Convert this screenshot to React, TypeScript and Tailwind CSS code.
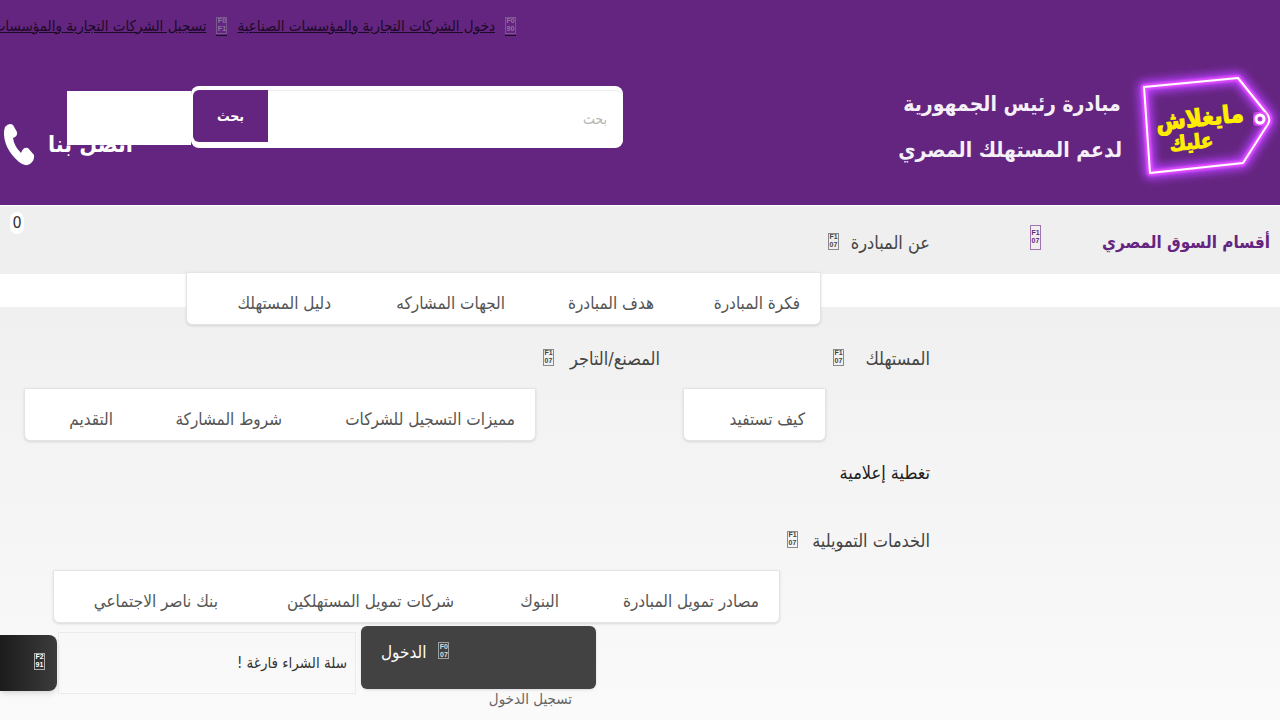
import { clsx } from 'clsx';

type SubLink = { text: string; width: string };

type MenuItem = {
  text: string;
  width: string;
  panel: string;
  links: SubLink[];
};

const about: MenuItem = {
  text: 'عن المبادرة',
  width: 'w-[109px]',
  panel: 'w-[635px]',
  links: [
    { text: 'فكرة المبادرة', width: 'w-[146px]' },
    { text: 'هدف المبادرة', width: 'w-[149px]' },
    { text: 'الجهات المشاركه', width: 'w-[174px]' },
    { text: 'دليل المستهلك', width: 'w-[120px]' },
  ],
};

const consumer: MenuItem = {
  text: 'المستهلك',
  width: 'w-[104px]',
  panel: 'w-[143px]',
  links: [{ text: 'كيف تستفيد', width: 'w-[100px]' }],
};

const merchant: MenuItem = {
  text: 'المصنع/التاجر',
  width: 'w-[124px]',
  panel: 'w-[512px]',
  links: [
    { text: 'مميزات التسجيل للشركات', width: 'w-[233px]' },
    { text: 'شروط المشاركة', width: 'w-[169px]' },
    { text: 'التقديم', width: 'w-[60px]' },
  ],
};

const finance: MenuItem = {
  text: 'الخدمات التمويلية',
  width: 'w-[150px]',
  panel: 'w-[727px]',
  links: [
    { text: 'مصادر تمويل المبادرة', width: 'w-[200px]' },
    { text: 'البنوك', width: 'w-[105px]' },
    { text: 'شركات تمويل المستهلكين', width: 'w-[236px]' },
    { text: 'بنك ناصر الاجتماعي', width: 'w-[130px]' },
  ],
};

// boxed code point, two hex digits per line
function Glyph({ code, className }: { code: string; className?: string }) {
  return (
    <span
      aria-hidden="true"
      dir="ltr"
      className={clsx(
        "flex w-[11px] shrink-0 flex-col items-center justify-center border border-current/60 font-['Liberation_Sans',sans-serif] text-[7px] leading-[8px] font-bold",
        className
      )}
    >
      <span>{code.slice(0, 2)}</span>
      <span>{code.slice(2)}</span>
    </span>
  );
}

function MenuEntry({ item }: { item: MenuItem }) {
  return (
    <li className="flex shrink-0 items-start">
      <a href="#" className={clsx('flex h-14 shrink-0 items-center justify-between pl-[7px] text-lg text-[#444]', item.width)}>
        <span>{item.text}</span>
        <Glyph code="F107" className="mb-1 h-[17px]" />
      </a>
      <ul
        className={clsx(
          'mt-[57px] flex h-[53px] shrink-0 items-center rounded-b-md border border-[#e4e4e4] bg-white pt-2.5 pr-5 text-[17px] text-[#555] shadow-sm',
          item.panel
        )}
      >
        {item.links.map(link => (
          <li key={link.text} className={clsx('shrink-0', link.width)}>
            <a href="#">{link.text}</a>
          </li>
        ))}
      </ul>
    </li>
  );
}

function Logo() {
  const tag = 'M14 27 L108 18 L137 54 Q141 59 138 64 L113 103 L20 113 Z';

  return (
    <svg viewBox="0 0 150 130" className="h-[130px] w-[150px] shrink-0" role="img" aria-label="مايغلاش عليك">
      <defs>
        <filter id="glow" x="-20%" y="-20%" width="140%" height="140%">
          <feGaussianBlur stdDeviation="4" />
        </filter>
        <filter id="soft" x="-20%" y="-20%" width="140%" height="140%">
          <feGaussianBlur stdDeviation="1" />
        </filter>
      </defs>
      <g fill="none" strokeLinejoin="round">
        <path d={tag} stroke="#b93cff" strokeWidth="12" filter="url(#glow)" />
        <path d={tag} stroke="#e650ff" strokeWidth="6" filter="url(#soft)" />
        <path d={tag} stroke="#fff" strokeWidth="2" />
        <circle cx="130" cy="59" r="5" stroke="#e650ff" strokeWidth="6" filter="url(#soft)" />
        <circle cx="130" cy="59" r="4" stroke="#fff" strokeWidth="3" />
      </g>
      <g fill="#ffee00" stroke="#ffee00" strokeWidth="1" fontWeight="700" textAnchor="middle" transform="rotate(-6 70 60)">
        <text x="70" y="66" fontSize="24">مايغلاش</text>
        <text x="59" y="88" fontSize="20">عليك</text>
      </g>
    </svg>
  );
}

function Header() {
  return (
    <header className="relative h-[205px] overflow-hidden bg-[#642580]">
      <div className="flex h-[52px] items-center pr-[764px] text-[15px] whitespace-nowrap text-[#1c0a26]">
        <a href="#" className="flex shrink-0 items-center gap-2.5">
          <span className="border-b border-[#1c0a26] pb-px">
            <Glyph code="F090" className="h-[17px] text-[#8d7799]" />
          </span>
          <span className="underline">دخول الشركات التجارية والمؤسسات الصناعية</span>
        </a>
        <a href="#" className="mr-2.5 flex shrink-0 items-center gap-2.5">
          <span className="border-b border-[#1c0a26] pb-px">
            <Glyph code="F0F1" className="h-[17px] text-[#8d7799]" />
          </span>
          <span className="underline">تسجيل الشركات التجارية والمؤسسات الصناعية</span>
        </a>
      </div>

      <div className="flex items-start justify-between pl-[67px]">
        <div className="flex items-center gap-2 pt-2">
          <Logo />
          <h1 className="w-[220px] pt-1 text-center text-[21px] leading-[46px] font-bold whitespace-nowrap text-[#f5f0f7]">
            مبادرة رئيس الجمهورية
            <br />
            لدعم المستهلك المصري
          </h1>
        </div>
        <form role="search" className="relative z-10 flex items-start pt-[34px]" onSubmit={e => e.preventDefault()}>
          <div className="flex h-[62px] w-[432px] rounded-lg border-t-4 border-b-6 border-white bg-white">
            <input
              type="text"
              aria-label="بحث"
              placeholder="بحث"
              className="min-w-0 grow rounded-tr-lg border-t border-[#eee] px-4 pt-1 text-sm outline-none placeholder:text-[#b5b5b5]"
            />
            <button type="submit" className="ml-0.5 w-[75px] rounded-l-md bg-[#642580] text-sm font-bold text-white">
              بحث
            </button>
          </div>
          <div className="mt-[5px] h-[54px] w-[124px] bg-white" />
        </form>
      </div>

      <a href="#" className="absolute top-[120px] left-0 flex h-12 items-center gap-3 text-[23px] font-bold text-white">
        <span>اتصل بنا</span>
        <svg viewBox="0 0 36 46" className="h-[46px] w-9" fill="#fff" aria-hidden="true">
          <path d="M5 6 Q9 1 13 4 L17 11 Q18 15 13 17 Q14 25 21 32 Q23 26 28 27 L34 34 Q35 39 30 43 Q25 46 19 41 Q3 27 4 10 Z" />
        </svg>
      </a>
    </header>
  );
}

function AccountBar() {
  return (
    <div className="flex items-start pt-[3px] pr-[334px]">
      <div className="w-[235px] shrink-0">
        <button type="button" className="flex h-[63px] w-full justify-end gap-3 rounded-md bg-[#424242] pt-3.5 pl-5 text-[17px] leading-6 text-white shadow">
          <Glyph code="F007" className="mt-0.5 h-[17px] text-[#ddd]" />
          <span>الدخول</span>
        </button>
        <a href="#" className="block pr-6 text-[15px] leading-5 text-[#666]">
          تسجيل الدخول
        </a>
      </div>
      <p className="mt-1.5 mr-[5px] flex h-[62px] w-[298px] shrink-0 items-center border border-[#ececec] pr-2 text-[15px] text-[#333]">
        سلة الشراء فارغة !
      </p>
      <button
        type="button"
        aria-label="سلة الشراء"
        className="mt-[9px] mr-px flex h-14 w-[57px] shrink-0 items-center rounded-r-lg bg-linear-to-r from-[#1c1c1c] to-[#3c3c3c] pr-3 pb-1 text-white shadow-md"
      >
        <Glyph code="F291" className="h-[17px]" />
      </button>
    </div>
  );
}

export default function App() {
  return (
    <div
      dir="rtl"
      className="flex min-h-screen flex-col overflow-x-hidden bg-white font-['DejaVu_Sans_Condensed','DejaVu_Sans',sans-serif]"
    >
      <Header />
      <main className="relative mt-px grow bg-[linear-gradient(to_bottom,#efefef_0,#efefef_68px,#fff_68px,#fff_101px,#f0f0f0_101px,#fafafa_100%)]">
        <span className="absolute top-1.5 left-2.5 flex h-[22px] w-3.5 items-center justify-center rounded-full bg-white text-base text-[#333]">
          0
        </span>
        <div className="flex pt-[9px] whitespace-nowrap">
          <a href="#" className="flex h-14 w-[250px] shrink-0 items-center justify-between pr-2.5 text-[17px] font-bold text-[#642580]">
            <span>أقسام السوق المصري</span>
            <Glyph code="F107" className="mb-3 h-[25px]" />
          </a>
          <nav className="mr-[100px] min-w-0 grow">
            <ul className="flex">
              <MenuEntry item={about} />
            </ul>
            <ul className="mt-1.5 flex gap-[23px]">
              <MenuEntry item={consumer} />
              <MenuEntry item={merchant} />
            </ul>
            <a href="#" className="mt-1 flex h-14 items-center text-lg text-[#222]">
              تغطية إعلامية
            </a>
            <ul className="mt-3 flex">
              <MenuEntry item={finance} />
            </ul>
            <AccountBar />
          </nav>
        </div>
      </main>
    </div>
  );
}
